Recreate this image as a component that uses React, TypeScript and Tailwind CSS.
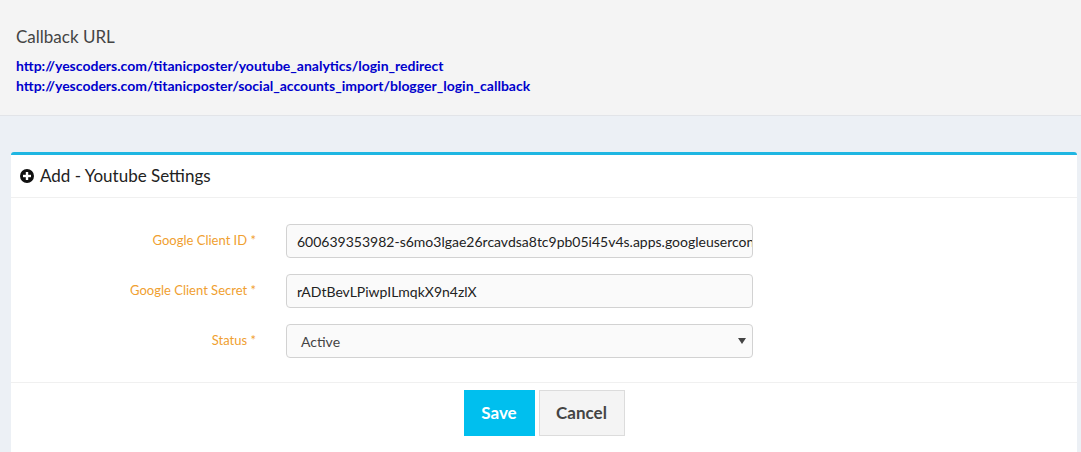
import React from "react";

export default function App() {
  const font = { fontFamily: '"Lato", "Noto Sans", sans-serif' };
  return (
    <div className="w-[1081px] h-[452px] overflow-hidden bg-[#ecf0f5] text-[#333]" style={font}>
      <div className="h-[116px] bg-[#f4f4f4] border-b border-[#e2e4e8] pl-[16px] pt-[26px]">
        <div className="text-[17px] leading-[22px] text-[#444]">Callback URL</div>
        <div className="mt-[8px] text-[14px] leading-[20px] font-bold text-[#0000cc]">
          <div>http://yescoders.com/titanicposter/youtube_analytics/login_redirect</div>
          <div>http://yescoders.com/titanicposter/social_accounts_import/blogger_login_callback</div>
        </div>
      </div>
      <div className="pt-[36px] pl-[11px] pr-[4px]">
        <div className="bg-white border-t-[3px] border-[#1fb6e2] rounded-[3px] h-[400px]">
          <div className="h-[43px] flex items-center pl-[9px] gap-[6px] border-b border-[#f0f0f0]">
            <svg width="14" height="14" viewBox="0 0 14 14">
              <circle cx="7" cy="7" r="7" fill="#111" />
              <rect x="3" y="5.8" width="8" height="2.4" fill="#fff" />
              <rect x="5.8" y="3" width="2.4" height="8" fill="#fff" />
            </svg>
            <span className="text-[17px] text-[#222]">Add - Youtube Settings</span>
          </div>
          <div className="pt-[26px] pb-[24px] flex flex-col gap-[16px] border-b border-[#f0f0f0]">
            {[
              ["Google Client ID *", "600639353982-s6mo3lgae26rcavdsa8tc9pb05i45v4s.apps.googleusercontent.com"],
              ["Google Client Secret *", "rADtBevLPiwpILmqkX9n4zlX"],
            ].map(([l, v]) => (
              <div key={l} className="flex items-center">
                <div className="w-[245px] text-right text-[13px] text-[#f0a030]">{l}</div>
                <div className="ml-[30px] w-[467px] h-[34px] border border-[#d2d2d2] rounded-[4px] bg-[#fafafa] flex items-center pl-[10px] overflow-hidden whitespace-nowrap text-[14px] text-[#222]">
                  {v}
                </div>
              </div>
            ))}
            <div className="flex items-center">
              <div className="w-[245px] text-right text-[13px] text-[#f0a030]">Status *</div>
              <div className="ml-[30px] w-[467px] h-[34px] border border-[#d2d2d2] rounded-[4px] bg-[#fafafa] flex items-center justify-between pl-[14px] pr-[6px] text-[14px] text-[#444]">
                <span>Active</span>
                <svg width="8" height="6" viewBox="0 0 8 6"><path d="M0 0 L8 0 L4 6 Z" fill="#444" /></svg>
              </div>
            </div>
          </div>
          <div className="flex justify-center gap-[4px] pt-[7px]">
            <button className="w-[71px] h-[46px] bg-[#00bfee] text-white font-bold text-[17px]">Save</button>
            <button className="w-[86px] h-[46px] bg-[#f4f4f4] border border-[#dcdcdc] text-[#444] font-bold text-[17px]">Cancel</button>
          </div>
        </div>
      </div>
    </div>
  );
}
